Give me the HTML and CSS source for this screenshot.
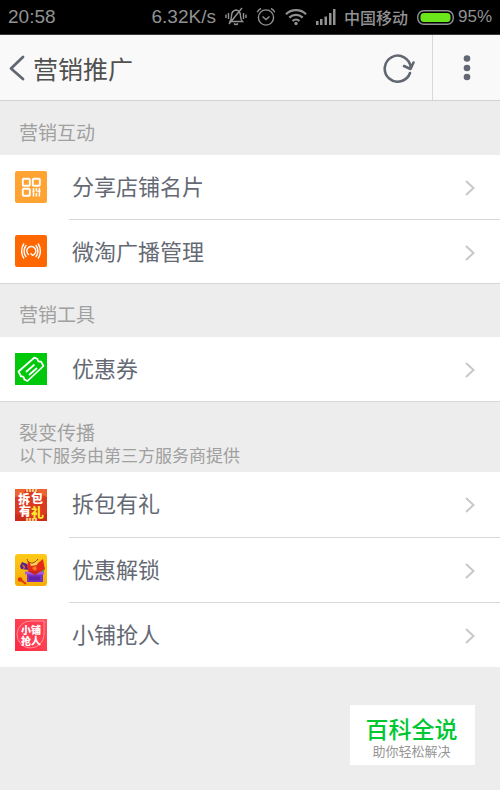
FILE: index.html
```html
<!DOCTYPE html>
<html lang="zh-CN">
<head>
<meta charset="utf-8">
<meta name="viewport" content="width=device-width, initial-scale=1">
<title>营销推广</title>
<link rel="stylesheet" href="styles.css">
</head>
<body>
<div class="status">
  <span class="time">20:58</span>
  <span class="speed">6.32K/s</span>
  <svg class="bell" width="22" height="20" viewBox="0 0 22 20" fill="none" stroke="#929292" stroke-width="1.4"><path d="M5 14.5h12.5c-1.5-1.5-2-3-2-5.500C15.500 5.500 14 3.500 11 3c-3 .5-4.500 2.500-4.500 6 0 2.500-.3 4-1.500 5.500zM9 16.500c1 1.300 3 1.300 4 0M4 17 17 1M3.500 6v6M1 7.500v3.500M18.500 6v6M21 7.500v3.500"/></svg>
  <svg class="alarm" width="20" height="20" viewBox="0 0 20 20" fill="none" stroke="#929292" stroke-width="1.400"><circle cx="10" cy="10.500" r="7.600"/><path d="M6.500 9.500l3.500 3 3.500-3M1.200 5.200C2 3.500 3.200 2.300 5 1.500M18.800 5.200C18 3.500 16.800 2.300 15 1.500"/></svg>
  <svg class="wifi" width="22" height="18" viewBox="0 0 22 18" fill="none" stroke="#929292" stroke-width="2.200"><path d="M1 6.200c5.500-5.400 14.500-5.400 20 0M4.300 9.600c3.800-3.700 9.600-3.700 13.400 0M7.500 13c2-2 5-2 7 0"/><circle cx="11" cy="15.500" r="1.700" fill="#929292" stroke="none"/></svg>
  <svg class="signal" width="20" height="16" viewBox="0 0 20 16" fill="#929292"><path d="M0 12h2.500v4H0zM4 10h2.500v6H4zM8.500 7.500H11V16H8.500zM13 4h2.500v12H13zM17 0h2.500v16H17z"/></svg>
  <span class="carrier">中国移动</span>
  <svg class="battery" width="37" height="15" viewBox="0 0 37 15"><rect x=".75" y=".75" width="35.500" height="13.500" rx="6" fill="none" stroke="#929292" stroke-width="1.400"/><rect x="3.500" y="3" width="30" height="9" rx="3.500" fill="#6be61a"/></svg>
  <span class="percent">95%</span>
</div>

<header class="header">
  <button class="back" type="button" aria-label="返回"><svg width="16" height="26" viewBox="0 0 16 26" fill="none" stroke="#626872" stroke-width="2.800" stroke-linecap="round" stroke-linejoin="round"><path d="M14 2 2 13.500 14 24"/></svg></button>
  <h1>营销推广</h1>
  <button class="refresh" type="button" aria-label="刷新"><svg width="32" height="30" viewBox="0 0 32 30" fill="none" stroke="#626872" stroke-width="2.600" stroke-linecap="round" stroke-linejoin="round"><path d="M27 20A13 13 0 1 1 27.700 14.500M21 13l6.500 3 3-6.500"/></svg></button>
  <button class="more" type="button" aria-label="更多"><svg width="8" height="26" viewBox="0 0 8 26" fill="#626872"><circle cx="4" cy="3.500" r="3.300"/><circle cx="4" cy="13" r="3.300"/><circle cx="4" cy="22" r="3.300"/></svg></button>
</header>

<main>
  <section>
    <div class="group"><h2>营销互动</h2></div>
    <ul>
      <li><a class="row" href="#card">
        <svg class="icon" viewBox="0 0 32 32"><rect width="32" height="32" rx="2" fill="#ffa332"/><g fill="none" stroke="#fff" stroke-width="1.900"><rect x="7.800" y="7.800" width="7" height="7" rx="1"/><rect x="17.800" y="7.800" width="7" height="7" rx="1"/><rect x="7.800" y="17.800" width="7" height="7" rx="1"/><path stroke-width="1.500" d="M18.500 17v2.500M18.500 21v4.500M21.400 17v3.500M21.400 22v3.500M24.400 17v2.500M24.400 21v4.500M17.500 20.300h2M22.500 20.300h3"/></g></svg>
        <span class="label">分享店铺名片</span>
        <svg class="arrow" viewBox="0 0 10 16"><path d="M1 1l7.500 7L1 15"/></svg></a></li>
      <li><a class="row" href="#broadcast">
        <svg class="icon" viewBox="0 0 32 32"><rect width="32" height="32" rx="2" fill="#ff6700"/><g fill="none" stroke="#fff" stroke-width="1.400" stroke-linecap="round"><path d="M13.500 19.500a4.500 4.500 0 1 1 4 .8l-1.500-1.500M11 10.500c-2.500 3-2.500 8 0 11M21 10.500c2.500 3 2.500 8 0 11M8.700 9c-2.700 4-2.700 10 0 14M23.300 9c2.700 4 2.700 10 0 14"/></g></svg>
        <span class="label">微淘广播管理</span>
        <svg class="arrow" viewBox="0 0 10 16"><path d="M1 1l7.500 7L1 15"/></svg></a></li>
    </ul>
  </section>

  <section>
    <div class="group"><h2>营销工具</h2></div>
    <ul>
      <li><a class="row" href="#coupon">
        <svg class="icon" viewBox="0 0 32 32"><rect width="32" height="32" fill="#00c80a"/><g fill="none" stroke="#fff" stroke-width="1.700" stroke-linejoin="round"><path d="M3.500 18.500 19.500 4.500l3 1.500c0 2 1.500 3 3.500 2.500l2.500 4.500L12.500 28l-3.300-1.500c.3-2.300-1-3.300-3.200-3z"/><path d="M11 19l8.500-7.500M14 22l8-7"/></g></svg>
        <span class="label">优惠券</span>
        <svg class="arrow" viewBox="0 0 10 16"><path d="M1 1l7.500 7L1 15"/></svg></a></li>
    </ul>
  </section>

  <section>
    <div class="group"><h2>裂变传播</h2><p>以下服务由第三方服务商提供</p></div>
    <ul class="tall">
      <li><a class="row" href="#gift">
        <svg class="icon" viewBox="0 0 32 32"><rect width="32" height="32" fill="#dc3a20"/><path d="M0 0h11l-3 6-8 2zM32 0H21l3 5 8 3z" fill="#ed6432"/><path d="M0 25l10 2 1 5H0zM32 25l-8 3-2 4h10z" fill="#c92c1b"/><path d="M11 0h11v3H11zM11 29h11v3H11z" fill="#f7bd79"/><path d="M13.500 0v3M16.500 0v3M19.500 0v3M13.500 29v3M16.500 29v3M19.500 29v3" stroke="#df6230"/><text class="art-text"><tspan x="3" y="15" font-size="12">拆</tspan><tspan x="16" y="14" font-size="12">包</tspan><tspan x="4" y="27" font-size="12">有</tspan><tspan x="16" y="28" font-size="13" class="yellow">礼</tspan></text></svg>
        <span class="label">拆包有礼</span>
        <svg class="arrow" viewBox="0 0 10 16"><path d="M1 1l7.500 7L1 15"/></svg></a></li>
      <li><a class="row" href="#unlock">
        <svg class="icon" viewBox="0 0 32 32"><defs><linearGradient id="gold" x2="0" y2="1"><stop stop-color="#ffc916"/><stop offset="1" stop-color="#f6ac08"/></linearGradient></defs><rect width="32" height="32" rx="3" fill="url(#gold)"/><path d="M5 12l2-4 5 2 2 6-8-1z" fill="#51219a"/><path d="M7.500 11l2 2-1 2" fill="none" stroke="#e56c20" stroke-width="1.500"/><path d="M12 13l1-6 3 2 6 1 6-5 1 6 1 4-4 4H14z" fill="#e32b19"/><path d="M13 5c0 4 5 6 10 0l-1 6-6 1z" fill="#ffd45a"/><path d="M12 5c1 5 7 6 11 0" fill="none" stroke="#9b3b16"/><path d="M17 14l3-2 2 2-2 3z" fill="#ff7c20"/><path d="M12 18h16v10H12z" fill="#7b2fc4"/><path d="M10 17.500h19v3H10z" fill="#a35be0"/><path d="M13 17h13l-6 4z" fill="#c8241c"/><path d="M14 22.500h11v4H14z" fill="#6122aa"/><path d="M26 17l3-1v2z" fill="#3ba65b"/><circle cx="5" cy="25.500" r="2.300" fill="#df3516"/><path d="M6 26l5 4" stroke="#df3516" stroke-width="1.800"/></svg>
        <span class="label">优惠解锁</span>
        <svg class="arrow" viewBox="0 0 10 16"><path d="M1 1l7.500 7L1 15"/></svg></a></li>
      <li><a class="row" href="#grab">
        <svg class="icon" viewBox="0 0 32 32"><defs><linearGradient id="rose" x1="0" y1="1" x2="1" y2="0"><stop stop-color="#ff2845"/><stop offset="1" stop-color="#ff525d"/></linearGradient></defs><rect width="32" height="32" fill="url(#rose)"/><path d="M16 2h13v14A13.500 13.500 0 1 1 16 2z" fill="#ff3c51" stroke="#ff9ba0" stroke-width=".9"/><text class="art-text" font-size="10"><tspan x="6" y="15">小铺</tspan><tspan x="6" y="26">抢人</tspan></text></svg>
        <span class="label">小铺抢人</span>
        <svg class="arrow" viewBox="0 0 10 16"><path d="M1 1l7.500 7L1 15"/></svg></a></li>
    </ul>
  </section>
</main>

<aside class="badge"><strong>百科全说</strong><span>助你轻松解决</span></aside>
</body>
</html>
```
FILE: styles.css
```css
* {
  box-sizing: border-box;
}

body {
  margin: 0;
  min-height: 100vh;
  background: #ededed;
  font-family: "Noto Sans CJK SC", sans-serif;
  font-weight: 400;
  color: #646973;
}

h1, h2, p, ul {
  margin: 0;
  padding: 0;
  font-weight: inherit;
}

ul {
  list-style: none;
}

button {
  display: flex;
  align-items: center;
  justify-content: center;
  padding: 0;
  border: 0;
  background: none;
}

.status {
  display: flex;
  align-items: center;
  gap: 9px;
  height: 35px;
  padding: 0 8px;
  border-bottom: 1px solid #3a3a3a;
  background: #000;
  color: #929292;
  font: 19px/36px "Liberation Sans", sans-serif;
}

.status svg {
  flex: none;
}

.time {
  margin-right: auto;
}

.carrier {
  margin-left: -1px;
  font: 500 16px/34px "Noto Sans CJK SC", sans-serif;
}

.percent {
  margin-left: -5px;
  font-size: 17px;
}

.header {
  display: flex;
  align-items: stretch;
  height: 66px;
  border-bottom: 1px solid #d3d3d3;
  background: #f9f9f9;
}

.back {
  width: 33px;
}

.header h1 {
  flex: 1;
  font-size: 25px;
  line-height: 66px;
  color: #505050;
}

.refresh {
  width: 66px;
}

.more {
  width: 68px;
  border-left: 1px solid #d8d8d8;
}

.group {
  padding: 16px 19px 9px;
  border-top: 1px solid transparent;
  color: #a0a0a0;
}

.group h2 {
  font-size: 19px;
  line-height: 28px;
}

.group p {
  font-size: 17px;
  line-height: 17px;
}

section + section .group {
  border-top-color: #d8d8d8;
}

.row {
  display: flex;
  align-items: stretch;
  gap: 22px;
  height: 64px;
  padding-left: 15px;
  background: #fff;
  color: inherit;
  text-decoration: none;
}

.tall .row {
  height: 65px;
}

.icon {
  flex: none;
  width: 32px;
  height: 32px;
  align-self: center;
}

.label {
  flex: 1;
  margin-right: -22px;
  padding-left: 3px;
  font-size: 22px;
  line-height: 61px;
}

li + li .label,
li + li .arrow {
  border-top: 1px solid #d8d8d8;
}

.arrow {
  box-sizing: content-box;
  flex: none;
  width: 10px;
  height: 16px;
  padding: 25px 25px 22px 0;
  fill: none;
  stroke: #c8c8c8;
  stroke-width: 2;
}

.art-text {
  fill: #fff;
  font-family: "Noto Sans CJK SC", sans-serif;
  font-weight: 900;
}

.yellow {
  fill: #ffe62c;
}

.badge {
  position: fixed;
  right: 25px;
  bottom: 25px;
  display: flex;
  flex-direction: column;
  align-items: center;
  width: 125px;
  padding: 9px 2px 6px 0;
  background: #fff;
}

.badge strong {
  font-size: 23px;
  line-height: 28px;
  color: #00c832;
  font-weight: 500;
}

.badge span {
  font-size: 13px;
  line-height: 17px;
  color: #969696;
}
```
